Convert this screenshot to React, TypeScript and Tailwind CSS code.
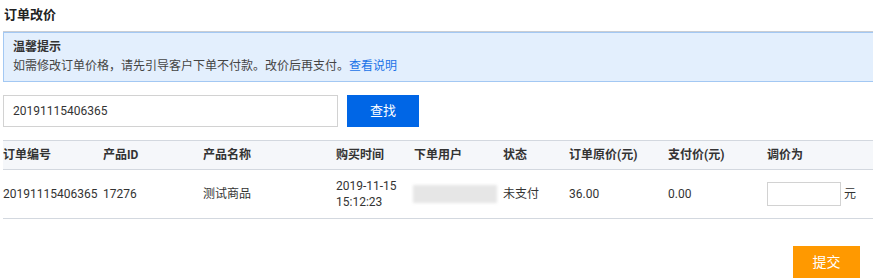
import { useState } from 'react';

const cols = 'grid grid-cols-[100px_100px_133px_78px_89px_66px_99px_99px_1fr]';

const headers = ['订单编号', '产品ID', '产品名称', '购买时间', '下单用户', '状态', '订单原价(元)', '支付价(元)', '调价为'];

const App = () => {
  const [orderNo, setOrderNo] = useState('20191115406365');
  const [price, setPrice] = useState('');

  return (
    <div className="w-[873px] h-[280px] bg-white pl-[3px] text-[12px] text-[#333] font-['Roboto','Noto_Sans_CJK_SC',sans-serif] overflow-hidden">
      <h1 className="pt-[6px] pl-[1px] h-[32px] text-[13px] font-bold text-[#222] leading-[18px]">订单改价</h1>

      <div className="h-[50px] bg-[#e3effd] border border-r-0 border-[#a3c8f3] shadow-[0_-1px_0_#c9cdd3] pl-[9px] pt-[5px]">
        <div className="font-bold text-[#333] leading-[18px]">温馨提示</div>
        <div className="text-[#444] leading-[18px] mt-[1px]">
          如需修改订单价格，请先引导客户下单不付款。改价后再支付。
          <a className="text-[#1a73e8] cursor-pointer">查看说明</a>
        </div>
      </div>

      <div className="flex items-center gap-[9px] mt-[13px]">
        <input
          value={orderNo}
          onChange={(e) => setOrderNo(e.target.value)}
          className="w-[335px] h-[32px] border border-[#d2d2d2] px-[9px] text-[12px] text-[#333] outline-none"
        />
        <button className="w-[72px] h-[32px] bg-[#0066e6] text-white text-[13px]">查找</button>
      </div>

      <div className="mt-[13px]">
        <div className={`${cols} h-[30px] items-center bg-[#f5f7fa] border-y border-[#d3d8df] font-bold text-[#333]`}>
          {headers.map((h) => (
            <div key={h}>{h}</div>
          ))}
        </div>
        <div className={`${cols} h-[49px] items-center border-b border-[#d3d8df] text-[#333]`}>
          <div>20191115406365</div>
          <div>17276</div>
          <div>测试商品</div>
          <div className="leading-[16px]">
            2019-11-15
            <br />
            15:12:23
          </div>
          <div>
            <div className="w-[84px] h-[18px] bg-[#e6e6e6] blur-[1.5px] -ml-[1px]" />
          </div>
          <div>未支付</div>
          <div>36.00</div>
          <div>0.00</div>
          <div className="flex items-center gap-[3px]">
            <input
              value={price}
              onChange={(e) => setPrice(e.target.value)}
              className="w-[74px] h-[24px] border border-[#d2d2d2] px-[4px] text-[12px] outline-none"
            />
            <span>元</span>
          </div>
        </div>
      </div>

      <div className="flex justify-end pr-[13px] mt-[27px]">
        <button className="w-[67px] h-[32px] bg-[#ff9900] text-white text-[14px]">提交</button>
      </div>
    </div>
  );
};

export default App;
